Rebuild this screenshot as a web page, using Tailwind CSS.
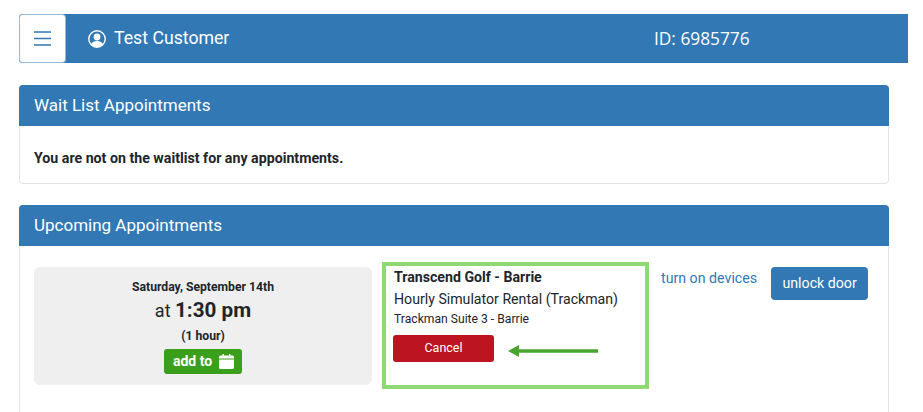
<!DOCTYPE html>
<html><head><meta charset="utf-8"><script src="https://cdn.jsdelivr.net/npm/@tailwindcss/browser@4"></script></head>
<body class="bg-white overflow-hidden font-['Roboto',sans-serif] text-[#212529]">
<div class="w-[923px] h-[412px] overflow-hidden pt-[14px] pl-[19px]">
  <div class="flex items-center w-[889px] h-[49px] bg-[#3178b5] text-white rounded-l-[4px]">
    <div class="flex items-center justify-center w-[47px] h-[49px] bg-white border border-[#3178b5]/50 rounded-[4px]">
      <svg width="17" height="15" viewBox="0 0 17 15" fill="none" stroke="#3178b5" stroke-width="1.5"><path d="M0 1H17M0 7.5H17M0 14H17"/></svg>
    </div>
    <svg class="ml-[22px]" width="18" height="18" viewBox="0 0 18 18"><circle cx="9" cy="9" r="8.2" fill="none" stroke="white" stroke-width="1.4"/><circle cx="9" cy="7" r="3.4" fill="white"/><path d="M3 14.2C4 11.8 6.4 11 9 11C11.6 11 14 11.8 15 14.2C13.5 16 11.2 17 9 17C6.8 17 4.5 16 3 14.2Z" fill="white"/></svg>
    <span class="ml-[8px] mt-[1px] w-[115px] whitespace-nowrap text-[17.7px] leading-none">Test Customer</span>
    <span class="ml-[425px] text-[17.3px] leading-none font-['Open_Sans',sans-serif]">ID: 6985776</span>
  </div>

  <section class="mt-[22px] w-[870px] h-[99px] border border-[#e3e3e3] rounded-[4px]">
    <h2 class="-m-px flex items-center h-[41px] pl-[15px] bg-[#3178b5] text-white text-[17px] rounded-t-[4px]">Wait List Appointments</h2>
    <p class="pl-[14px] pt-[24px] text-[14.2px] leading-[18px] font-bold">You are not on the waitlist for any appointments.</p>
  </section>

  <section class="mt-[21px] w-[870px] h-[240px] border border-[#e3e3e3] rounded-[4px]">
    <h2 class="-m-px flex items-center h-[41px] pl-[15px] bg-[#3178b5] text-white text-[17px] rounded-t-[4px]">Upcoming Appointments</h2>
    <div class="flex items-start pl-[14px] pt-[22px]">
      <div class="flex flex-col items-center w-[338px] h-[118px] pt-[13px] bg-[#efefef] rounded-[6px] text-center">
        <div class="text-[12.2px] leading-[15px] font-bold">Saturday, September 14th</div>
        <div class="mt-[3px] text-[18px] leading-[24px]">at <span class="text-[20.7px] font-bold">1:30 pm</span></div>
        <div class="mt-[6px] text-[12.2px] leading-[15px] font-bold">(1 hour)</div>
        <div class="mt-[5px] flex items-center gap-[7px] h-[25px] pl-[9px] pr-[8px] bg-[#3aa01b] text-white text-[14px] font-bold rounded-[3px]">add to
          <svg width="15" height="15" viewBox="0 0 15 15" fill="white"><path d="M0 5.5H15V13.2A1.6 1.6 0 0 1 13.4 15H1.6A1.6 1.6 0 0 1 0 13.2ZM1.6 1.5H13.4A1.6 1.6 0 0 1 15 3.1V4.4H0V3.1A1.6 1.6 0 0 1 1.6 1.5ZM3.5 0H5V2H3.5ZM10 0H11.5V2H10Z"/></svg>
        </div>
      </div>
      <div class="relative ml-[10px] -mt-[5px] w-[267px] h-[127px] border-4 border-[#8ed973] pl-[8px] pt-[2px]">
        <div class="text-[14.15px] leading-[18px] font-bold">Transcend Golf - Barrie</div>
        <div class="mt-[4px] text-[14.15px] leading-[18px]">Hourly Simulator Rental (Trackman)</div>
        <div class="mt-[3px] text-[12.15px] leading-[16px]">Trackman Suite 3 - Barrie</div>
        <div class="-ml-[1px] mt-[8px] flex items-center justify-center w-[101px] h-[27px] bg-[#bc1420] text-white text-[12.5px] rounded-[3px]">Cancel</div>
        <svg class="absolute left-[122px] top-[79px]" width="90" height="12" viewBox="0 0 90 12" fill="#4aa52e"><path d="M0 6L11 0V4.3H90V7.7H11V12Z"/></svg>
      </div>
      <a class="ml-[12px] mt-[1px] pt-[1px] text-[#3178b5] text-[14.2px] leading-[18px]">turn on devices</a>
      <div class="ml-[14px] flex items-center justify-center w-[97px] h-[33px] pt-[1px] bg-[#3178b5] text-white text-[14.2px] rounded-[4px]">unlock door</div>
    </div>
  </section>
</div>
</body></html>
